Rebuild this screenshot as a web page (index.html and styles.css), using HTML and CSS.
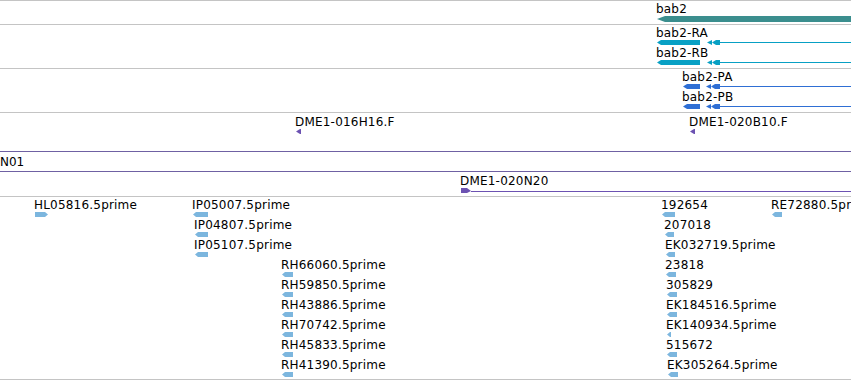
FILE: index.html
```html
<!DOCTYPE html>
<html lang="en">
<head>
    <meta charset="UTF-8">
    <meta name="viewport" content="width=device-width, initial-scale=1.0">
    <title>Track View</title>
    <link rel="stylesheet" href="styles.css">
</head>
<body>

    <div class="view">

        <!-- gene -->
        <div class="track track-gene">
            <div class="feature" style="left:657px;top:1px">
                <span class="label">bab2</span>
                <svg class="glyph" width="194" height="6"><polygon class="gene" points="0,3 8,0 194,0 194,6 8,6"/></svg>
            </div>
        </div>

        <!-- transcripts -->
        <div class="track track-mrna">
            <div class="feature" style="left:657px;top:1px">
                <span class="label">bab2-RA</span>
                <svg class="glyph" width="194" height="5">
                    <g class="mrna">
                        <polygon points="0,2.5 4,0 43,0 43,5 4,5"/>
                        <polygon points="50,2.5 55,0 55,5"/>
                        <polygon points="55,2.5 59,0 63,0 63,5 59,5"/>
                        <rect x="63" y="2" width="131" height="1"/>
                    </g>
                </svg>
            </div>
            <div class="feature" style="left:657px;top:21px">
                <span class="label">bab2-RB</span>
                <svg class="glyph" width="194" height="5">
                    <g class="mrna">
                        <polygon points="0,2.5 4,0 43,0 43,5 4,5"/>
                        <polygon points="50,2.5 55,0 55,5"/>
                        <polygon points="55,2.5 59,0 63,0 63,5 59,5"/>
                        <rect x="63" y="2" width="131" height="1"/>
                    </g>
                </svg>
            </div>
        </div>

        <!-- proteins -->
        <div class="track track-protein">
            <div class="feature" style="left:683px;top:1px">
                <span class="label">bab2-PA</span>
                <svg class="glyph" width="168" height="5">
                    <g class="protein">
                        <polygon points="0,2.5 4,0 17,0 17,5 4,5"/>
                        <polygon points="23,2.5 28,0 28,5"/>
                        <polygon points="28,2.5 32,0 37,0 37,5 32,5"/>
                        <rect x="37" y="2" width="131" height="1"/>
                    </g>
                </svg>
            </div>
            <div class="feature" style="left:683px;top:21px">
                <span class="label">bab2-PB</span>
                <svg class="glyph" width="168" height="5">
                    <g class="protein">
                        <polygon points="0,2.5 4,0 17,0 17,5 4,5"/>
                        <polygon points="23,2.5 28,0 28,5"/>
                        <polygon points="28,2.5 32,0 37,0 37,5 32,5"/>
                        <rect x="37" y="2" width="131" height="1"/>
                    </g>
                </svg>
            </div>
        </div>

        <!-- clone ends -->
        <div class="track track-clones">
            <div class="feature" style="left:296px;top:2px">
                <span class="label">DME1-016H16.F</span>
                <svg class="glyph" width="5" height="5"><polygon class="clone" points="0,2.5 4,0 5,0 5,5 4,5"/></svg>
            </div>
            <div class="feature" style="left:690px;top:2px">
                <span class="label">DME1-020B10.F</span>
                <svg class="glyph" width="5" height="5"><polygon class="clone" points="0,2.5 4,0 5,0 5,5 4,5"/></svg>
            </div>
        </div>

        <!-- reference -->
        <div class="track track-ref">
            <span class="ref-name">N01</span>
        </div>

        <!-- BAC -->
        <div class="track track-bac">
            <div class="feature" style="left:461px;top:2px">
                <span class="label">DME1-020N20</span>
                <svg class="glyph" width="390" height="5">
                    <g class="clone">
                        <polygon points="0,0 6,0 10,3 6,5 0,5"/>
                        <rect x="10" y="3" width="380" height="1"/>
                    </g>
                </svg>
            </div>
        </div>

        <!-- ESTs -->
        <div class="track track-est">
            <div class="feature" style="left:35px;top:1px">
                <span class="label">HL05816.5prime</span>
                <svg class="glyph" width="13" height="5"><polygon class="est" points="0,0 10,0 13,2.5 10,5 0,5"/></svg>
            </div>
            <div class="feature" style="left:193px;top:1px">
                <span class="label">IP05007.5prime</span>
                <svg class="glyph" width="15" height="5"><polygon class="est" points="0,2.5 3,0 15,0 15,5 3,5"/></svg>
            </div>
            <div class="feature" style="left:662px;top:1px">
                <span class="label">192654</span>
                <svg class="glyph" width="13" height="5"><polygon class="est" points="0,2.5 3,0 13,0 13,5 3,5"/></svg>
            </div>
            <div class="feature" style="left:772px;top:1px">
                <span class="label">RE72880.5prime</span>
                <svg class="glyph" width="10" height="5"><polygon class="est" points="0,2.5 3,0 10,0 10,5 3,5"/></svg>
            </div>

            <div class="feature" style="left:195px;top:21px">
                <span class="label">IP04807.5prime</span>
                <svg class="glyph" width="13" height="5"><polygon class="est" points="0,2.5 3,0 13,0 13,5 3,5"/></svg>
            </div>
            <div class="feature" style="left:665px;top:21px">
                <span class="label">207018</span>
                <svg class="glyph" width="9" height="5"><polygon class="est" points="0,2.5 3,0 9,0 9,5 3,5"/></svg>
            </div>

            <div class="feature" style="left:195px;top:41px">
                <span class="label">IP05107.5prime</span>
                <svg class="glyph" width="13" height="5"><polygon class="est" points="0,2.5 3,0 13,0 13,5 3,5"/></svg>
            </div>
            <div class="feature" style="left:666px;top:41px">
                <span class="label">EK032719.5prime</span>
                <svg class="glyph" width="9" height="5"><polygon class="est" points="0,2.5 3,0 9,0 9,5 3,5"/></svg>
            </div>

            <div class="feature" style="left:282px;top:61px">
                <span class="label">RH66060.5prime</span>
                <svg class="glyph" width="11" height="5"><polygon class="est" points="0,2.5 3,0 11,0 11,5 3,5"/></svg>
            </div>
            <div class="feature" style="left:666px;top:61px">
                <span class="label">23818</span>
                <svg class="glyph" width="10" height="5"><polygon class="est" points="0,2.5 3,0 10,0 10,5 3,5"/></svg>
            </div>

            <div class="feature" style="left:282px;top:81px">
                <span class="label">RH59850.5prime</span>
                <svg class="glyph" width="11" height="5"><polygon class="est" points="0,2.5 3,0 11,0 11,5 3,5"/></svg>
            </div>
            <div class="feature" style="left:667px;top:81px">
                <span class="label">305829</span>
                <svg class="glyph" width="10" height="5"><polygon class="est" points="0,2.5 3,0 10,0 10,5 3,5"/></svg>
            </div>

            <div class="feature" style="left:282px;top:101px">
                <span class="label">RH43886.5prime</span>
                <svg class="glyph" width="11" height="5"><polygon class="est" points="0,2.5 3,0 11,0 11,5 3,5"/></svg>
            </div>
            <div class="feature" style="left:667px;top:101px">
                <span class="label">EK184516.5prime</span>
                <svg class="glyph" width="10" height="5"><polygon class="est" points="0,2.5 3,0 10,0 10,5 3,5"/></svg>
            </div>

            <div class="feature" style="left:282px;top:121px">
                <span class="label">RH70742.5prime</span>
                <svg class="glyph" width="11" height="5"><polygon class="est" points="0,2.5 3,0 11,0 11,5 3,5"/></svg>
            </div>
            <div class="feature" style="left:667px;top:121px">
                <span class="label">EK140934.5prime</span>
                <svg class="glyph" width="4" height="5"><polygon class="est" points="0,2.5 3,0 4,0 4,5 3,5"/></svg>
            </div>

            <div class="feature" style="left:282px;top:141px">
                <span class="label">RH45833.5prime</span>
                <svg class="glyph" width="11" height="5"><polygon class="est" points="0,2.5 3,0 11,0 11,5 3,5"/></svg>
            </div>
            <div class="feature" style="left:667px;top:141px">
                <span class="label">515672</span>
                <svg class="glyph" width="10" height="5"><polygon class="est" points="0,2.5 3,0 10,0 10,5 3,5"/></svg>
            </div>

            <div class="feature" style="left:282px;top:161px">
                <span class="label">RH41390.5prime</span>
                <svg class="glyph" width="11" height="5"><polygon class="est" points="0,2.5 3,0 11,0 11,5 3,5"/></svg>
            </div>
            <div class="feature" style="left:668px;top:161px">
                <span class="label">EK305264.5prime</span>
                <svg class="glyph" width="10" height="5"><polygon class="est" points="0,2.5 3,0 10,0 10,5 3,5"/></svg>
            </div>
        </div>

    </div>

</body>
</html>
```

FILE: styles.css
```css
html, body {
    margin: 0;
    padding: 0;
    background-color: #fff;
    overflow: hidden;
}

body {
    font-family: "DejaVu Sans", Verdana, sans-serif;
    font-size: 12px;
    color: #000;
}

.view {
    width: 851px;
    height: 380px;
    overflow: hidden;
}

.track {
    position: relative;
    border-top: 1px solid #c4c4c4;
}

.track-gene {
    height: 23px;
}

.track-mrna,
.track-protein {
    height: 43px;
}

.track-clones {
    height: 38px;
}

.track-ref {
    height: 16px;
    padding-top: 3px;
    border-top-color: #6f61a3;
}

.track-bac {
    height: 24px;
    border-top-color: #6f61a3;
}

.track-est {
    height: 182px;
    border-bottom: 1px solid #c4c4c4;
}

.ref-name {
    display: block;
    line-height: 14px;
}

.feature {
    position: absolute;
}

.label {
    display: block;
    margin-left: -1px;
    line-height: 14px;
    letter-spacing: 0.2px;
    white-space: nowrap;
}

.glyph {
    display: block;
}

.gene {
    fill: #3b8e8e;
}

.mrna {
    fill: #08a0c4;
}

.protein {
    fill: #2f6fd4;
}

.clone {
    fill: #6c52b2;
}

.est {
    fill: #7cb6de;
}
```
